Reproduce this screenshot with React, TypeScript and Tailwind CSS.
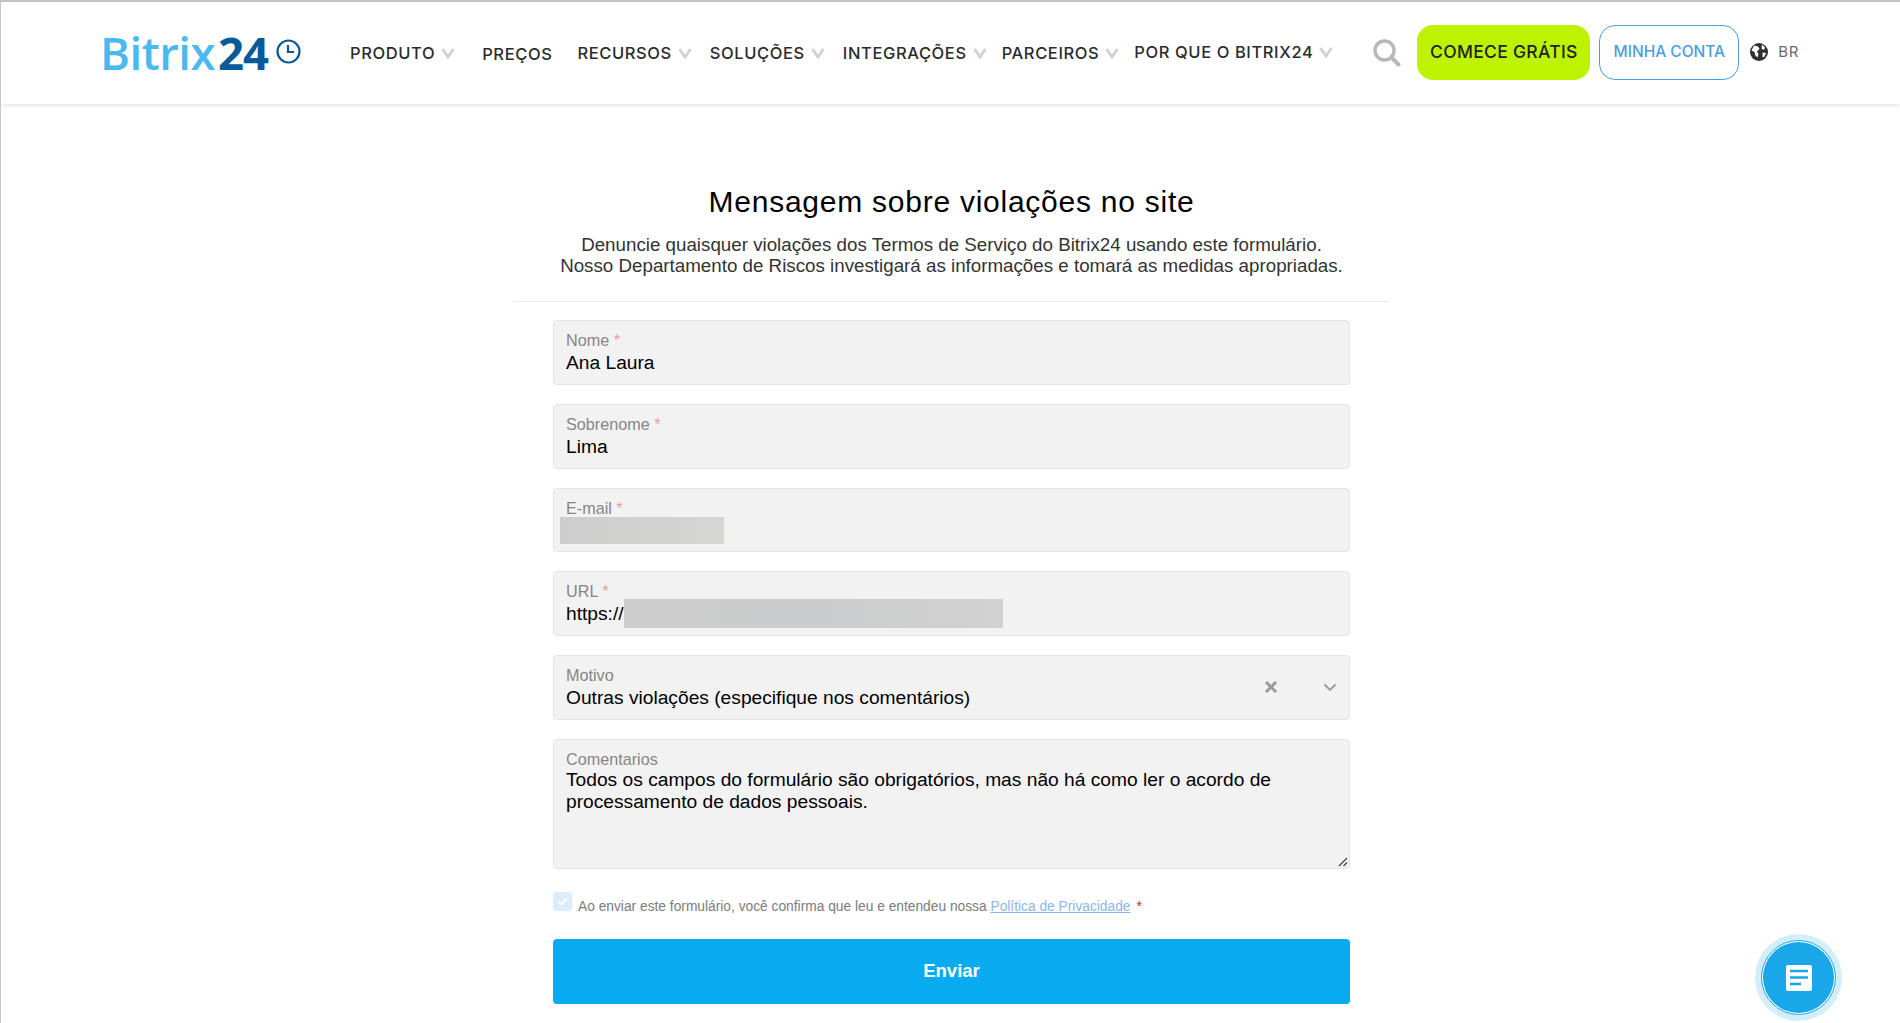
import type { ReactNode } from 'react'

const navItems = [
  { label: 'PRODUTO', chevron: true, className: 'ml-[49px]' },
  { label: 'PREÇOS', chevron: false, className: 'ml-[27px] mt-[2px]' },
  { label: 'RECURSOS', chevron: true, className: 'ml-[25px]' },
  { label: 'SOLUÇÕES', chevron: true, className: 'ml-[18px]' },
  { label: 'INTEGRAÇÕES', chevron: true, className: 'ml-[18px]' },
  { label: 'PARCEIROS', chevron: true, className: 'ml-[15px]' },
  { label: 'POR QUE O BITRIX24', chevron: true, className: 'ml-[15px] -mt-[1px]' },
]

function NavChevron() {
  return (
    <svg width="14" height="11" viewBox="0 0 14 11" fill="none" className="shrink-0" aria-hidden="true">
      <path d="M1.5 1 7 9l5.500-8" stroke="#d2d2d2" strokeWidth="3" />
    </svg>
  )
}

function Header() {
  return (
    <header className="flex h-[104px] shrink-0 items-center border-t-2 border-[#c4c4c4] bg-white pl-[99px] shadow-[0_2px_5px_rgba(0,0,0,0.1)] font-['Inter',sans-serif]">
      {/* Logo */}
      <div className="flex w-[201px] shrink-0 items-center">
        <span className="font-['Open_Sans',sans-serif] text-[45.500px] leading-none font-semibold tracking-[-0.5px] text-[#4cb8ee]">
          Bitrix
        </span>
        <span className="ml-[3px] font-['Open_Sans',sans-serif] text-[45.500px] leading-none font-bold tracking-[-1px] text-[#0a5a98]">
          24
        </span>
        <svg width="25" height="25" viewBox="0 0 25 25" fill="none" className="mb-[4px] ml-[8px] shrink-0" aria-hidden="true">
          <circle cx="12.5" cy="12.5" r="11" stroke="#0a5a98" strokeWidth="2.2" />
          <path d="M12 6v7h6" stroke="#0a5a98" strokeWidth="2.2" />
        </svg>
      </div>

      {/* Nav */}
      <nav className="flex items-center">
        {navItems.map((item) => (
          <a
            key={item.label}
            className={`flex items-center gap-[6px] text-[16.500px] font-medium tracking-[0.6px] text-[#2b2b2b] ${item.className}`}
          >
            {item.label}
            {item.chevron && <NavChevron />}
          </a>
        ))}
      </nav>

      <svg width="28" height="28" viewBox="0 0 28 28" fill="none" className="ml-[40px] shrink-0" aria-hidden="true">
        <circle cx="11.5" cy="11.5" r="9.5" stroke="#b8b8b8" strokeWidth="3.400" />
        <path d="m18.500 18.500 7 7" stroke="#b8b8b8" strokeWidth="4" strokeLinecap="round" />
      </svg>

      <a className="mb-[2px] ml-[16px] flex h-[55px] w-[173px] items-center justify-center rounded-[16px] bg-[#bdf300] text-[17.500px] font-medium tracking-[0.3px] text-[#222]">
        COMECE GRÁTIS
      </a>
      <a className="mb-[2px] ml-[9px] flex h-[55px] w-[140px] items-center justify-center rounded-[16px] border border-[#4a9ee0] text-[15.500px] font-medium text-[#4a9ee0]">
        MINHA CONTA
      </a>

      <svg width="18" height="18" viewBox="0 0 18 18" className="mb-[2px] ml-[11px] shrink-0" aria-hidden="true">
        <circle cx="9" cy="9" r="9" fill="#2f2f2f" />
        <path d="M4 2.500 8 3.500 9.500 6 7 8.500 8.500 11l-1 3.500L5 12 4.500 9 1.500 7.500ZM12 1.500l3 3-1 2.500-2.500-1.500ZM12.500 9.500l3.500.5-1.500 3.500-2 1Z" fill="#fff" />
      </svg>
      <span className="mb-[2px] ml-[10px] text-[15px] tracking-[0.5px] text-[#666]">BR</span>
    </header>
  )
}

function Field({ label, required, children, right }: { label: string; required?: boolean; children: ReactNode; right?: ReactNode }) {
  return (
    <div className="relative flex h-[64.75px] flex-col rounded-[4px] border border-[#e4e4e4] bg-[#f2f2f2] pt-[10px] pl-[12px]">
      <div className="h-[19px] text-[16.200px] leading-[18px] text-[#868686]">
        {label}
        {required && <span className="text-[#ee9c9c]"> *</span>}
      </div>
      <div className="mt-[1px] flex h-[23px] items-center text-[19.200px] leading-[23px] text-black">{children}</div>
      {right}
    </div>
  )
}

function Blur({ className }: { className: string }) {
  return <div className={`shrink-0 ${className}`} />
}

function ReportForm() {
  return (
    <main className="ml-[513px] flex w-[875px] flex-col items-center font-['Liberation_Sans',sans-serif]">
      <h1 className="mt-[80px] text-[30px] leading-[36px] tracking-[0.75px] text-black">Mensagem sobre violações no site</h1>
      <p className="mt-[14px] text-center text-[18.760px] leading-[21px] text-[#333]">
        Denuncie quaisquer violações dos Termos de Serviço do Bitrix24 usando este formulário.
        <br />
        Nosso Departamento de Riscos investigará as informações e tomará as medidas apropriadas.
      </p>
      <div className="mt-[25px] h-px w-full bg-[#e9e9e9]" />

      <form className="mt-[18px] flex w-[797px] flex-col gap-[19px]">
        <Field label="Nome" required>Ana Laura</Field>
        <Field label="Sobrenome" required>Lima</Field>
        <Field label="E-mail" required>
          <Blur className="-ml-[6px] h-[27px] w-[164px] bg-gradient-to-r from-[#cdcdcd] to-[#d6d6d4]" />
        </Field>
        <Field label="URL" required>
          https://
          <Blur className="h-[29px] w-[379px] bg-gradient-to-r from-[#cdcdcd] via-[#cbcccd] to-[#d2d2d2]" />
        </Field>
        <Field
          label="Motivo"
          right={
            <div className="absolute top-[24px] right-[12px] flex items-center gap-[45px]">
              <svg width="14" height="14" viewBox="0 0 14 14" aria-hidden="true">
                <path d="m2 2 10 10M12 2 2 12" stroke="#9a9a9a" strokeWidth="3" />
              </svg>
              <svg width="14" height="9" viewBox="0 0 14 9" fill="none" aria-hidden="true">
                <path d="m1.500 1.500 5.500 5.500 5.500-5.500" stroke="#999" strokeWidth="1.800" />
              </svg>
            </div>
          }
        >
          Outras violações (especifique nos comentários)
        </Field>

        <div className="relative h-[130px] rounded-[4px] border border-[#e4e4e4] bg-[#f2f2f2] pt-[10px] pl-[12px]">
          <div className="h-[19px] text-[16.200px] leading-[18px] text-[#868686]">Comentarios</div>
          <div className="w-[740px] text-[19.200px] leading-[22.500px] text-black">
            Todos os campos do formulário são obrigatórios, mas não há como ler o acordo de processamento de dados pessoais.
          </div>
          <svg width="10" height="10" viewBox="0 0 10 10" className="absolute right-[1px] bottom-[1px]" aria-hidden="true">
            <path d="M9 1 1 9M9 5.500 5.500 9" stroke="#444" strokeWidth="1.200" />
          </svg>
        </div>

        <div className="mt-[4px] flex h-[19px] items-start">
          <span className="flex h-[19px] w-[19px] shrink-0 items-center justify-center rounded-[3px] bg-[#dcedf9]">
            <svg width="11" height="9" viewBox="0 0 11 9" fill="none" aria-hidden="true">
              <path d="m1.500 4.500 3 3 5-6" stroke="#fff" strokeWidth="1.800" />
            </svg>
          </span>
          <span className="mt-[7px] ml-[6px] text-[13.770px] leading-[16px] text-[#7c7c7c]">
            Ao enviar este formulário, você confirma que leu e entendeu nossa{' '}
            <a className="text-[#8ab8e8] underline">Política de Privacidade</a>
            <span className="ml-[6px] text-[#d8232a]">*</span>
          </span>
        </div>

        <button type="button" className="mt-[9px] h-[65px] rounded-[4px] bg-[#08aaf0] text-[18.500px] font-bold text-white">
          Enviar
        </button>
      </form>
    </main>
  )
}

export default function App() {
  return (
    <div className="relative flex h-screen flex-col overflow-hidden border-l border-[#c8c8c8] bg-white">
      <Header />
      <ReportForm />

      {/* Chat widget */}
      <div className="absolute top-[934px] left-[1754px] flex h-[87px] w-[87px] items-center justify-center rounded-full bg-[#d3eefb]">
        <div className="flex h-[75px] w-[75px] items-center justify-center rounded-full border border-[#19a7ea] bg-white">
          <div className="flex h-[71px] w-[71px] items-center justify-center rounded-full bg-[#19a7ea]">
            <svg width="26" height="26" viewBox="0 0 26 26" aria-hidden="true">
              <rect width="26" height="26" rx="2" fill="#fff" />
              <path d="M4 6h18M4 12.500h18" stroke="#19a7ea" strokeWidth="2.600" />
              <path d="M4 19h11" stroke="#19a7ea" strokeWidth="2.600" />
            </svg>
          </div>
        </div>
      </div>
    </div>
  )
}
